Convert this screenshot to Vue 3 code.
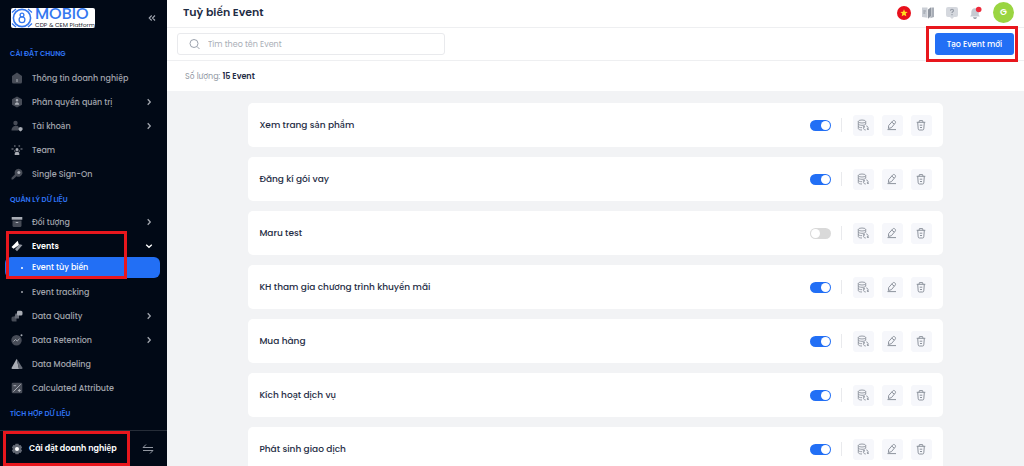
<template>
  <div class="layout">
    <aside class="sidebar">
      <header class="sidebar-header">
        <a href="#" class="logo" aria-label="MOBIO CDP &amp; CEM Platform">
          <svg width="22" height="20" viewBox="0 0 22 20" fill="none" stroke="#3478f0">
            <path d="M1 4.500 5 1M17 1l4 3.500M1 15.500l4 3.500M17 19l4-3.500" stroke-width="1.300" />
            <circle cx="11" cy="10" r="8.600" stroke-width="1.600" />
            <circle cx="11" cy="7" r="1.900" stroke-width="1.300" />
            <circle cx="11" cy="11.700" r="2.900" stroke-width="1.300" />
          </svg>
          <span class="logo-text">
            <span class="logo-name">MOBIO</span>
            <span class="logo-tagline">CDP &amp; CEM Platform</span>
          </span>
        </a>
        <button class="btn-plain" aria-label="Thu gọn">
          <svg width="8" height="8" viewBox="0 0 8 8" fill="none" stroke="#a3a8b2" stroke-width="1.1">
            <path d="M3.700 1.500 1.200 4l2.500 2.500M7 1.500 4.500 4 7 6.500" />
          </svg>
        </button>
      </header>

      <nav class="nav">
        <section v-for="group in groups" :key="group.title" class="nav-group">
          <h2 class="nav-heading">{{ group.title }}</h2>
          <div
            v-for="item in group.items"
            :key="item.label"
            class="nav-block"
            :class="{ highlighted: item.open }"
          >
            <a href="#" class="nav-item" :class="{ open: item.open }">
              <svg class="nav-icon" width="12" height="12" viewBox="0 0 12 12" fill="none">
                <path
                  v-for="(shape, i) in icons[item.icon]"
                  :key="i"
                  :d="shape.d"
                  :fill="shape.fill || 'none'"
                  :stroke="shape.stroke"
                />
              </svg>
              <span class="nav-label">{{ item.label }}</span>
              <svg
                v-if="item.children || item.expandable"
                class="chevron"
                width="8"
                height="8"
                viewBox="0 0 8 8"
                fill="none"
                stroke="currentColor"
                stroke-width="1.3"
              >
                <path :d="item.open ? 'M1.200 2.700 4 5.300l2.800-2.600' : 'M2.700 1.200 5.300 4 2.700 6.800'" />
              </svg>
            </a>
            <a
              v-for="child in item.children"
              :key="child.label"
              href="#"
              class="nav-child"
              :class="{ active: child.active }"
            >
              <span class="bullet"></span>
              {{ child.label }}
            </a>
          </div>
        </section>
      </nav>

      <footer class="sidebar-footer">
        <a href="#" class="footer-link">
          <svg width="12" height="12" viewBox="0 0 12 12">
            <path
              d="M4.500 0.800h3l.5 1.500 1.600-.3 1.500 2.500L10 6l1.100 1.500L9.600 10 8 9.700l-.5 1.500h-3L4 9.700 2.400 10 .9 7.500 2 6 .9 4.500 2.400 2l1.600.3z"
              fill="#636974"
            />
            <circle cx="6" cy="6" r="2" fill="#fff" />
          </svg>
          Cài đặt doanh nghiệp
        </a>
        <button class="btn-plain" aria-label="Chuyển đổi">
          <svg width="12" height="10" viewBox="0 0 12 10" fill="none" stroke="#9297a1" stroke-width="1">
            <path d="M4 .5 1 3.500h10M8 9.500l3-3H1" />
          </svg>
        </button>
      </footer>
    </aside>

    <main class="main">
      <header class="topbar">
        <h1 class="page-title">Tuỳ biến Event</h1>
        <div class="topbar-actions">
          <button class="btn-plain" aria-label="Tiếng Việt">
            <svg width="14" height="14" viewBox="0 0 14 14">
              <circle cx="7" cy="7" r="7" fill="#e8101c" />
              <path d="m7 3.200 1 2.500 2.700.2-2 1.700.6 2.700L7 8.900l-2.300 1.400.6-2.700-2-1.700L6 5.700z" fill="#ffe01f" />
            </svg>
          </button>
          <button class="btn-plain" aria-label="Tài liệu">
            <svg width="14" height="14" viewBox="0 0 14 14">
              <path d="M1 1.500h5.500v10.200L1 11z" fill="#cbcfd6" />
              <path d="M7 3.400 10 1.300v8.900L7 12.800z" fill="#8f959f" />
              <path d="M10.300 1.500H13V11l-4.200 1.200 1.500-1.600z" fill="#a9aeb7" />
              <path d="M2.300 5h2.500M2.300 7h2" stroke="#8f959f" />
            </svg>
          </button>
          <button class="btn-plain" aria-label="Trợ giúp">
            <svg width="14" height="14" viewBox="0 0 14 14">
              <path d="M3 1h8a2 2 0 0 1 2 2v6a2 2 0 0 1-2 2H9l-2 2-2-2H3a2 2 0 0 1-2-2V3a2 2 0 0 1 2-2z" fill="#d5d8de" />
              <path d="M5.500 4.700c0-2 3-2 3 0 0 1-1.500 1-1.500 2.300M7 8v1.200" fill="none" stroke="#9298a3" stroke-width="1.100" />
            </svg>
          </button>
          <button class="btn-plain" aria-label="Thông báo">
            <svg width="14" height="14" viewBox="0 0 14 14">
              <path d="M6 2.200c2.500 0 3.700 1.800 3.700 4v2.300l1.100 2H1.200l1.100-2V6.200c0-2.200 1.200-4 3.700-4z" fill="#c6cad1" />
              <path d="M4 11.200h4c-.3 2.400-3.700 2.400-4 0z" fill="#9da3ad" />
              <circle cx="9.700" cy="3.500" r="2.800" fill="#ee2a3b" />
            </svg>
          </button>
          <button class="avatar">G</button>
        </div>
      </header>

      <div class="toolbar">
        <label class="search-box">
          <svg width="12" height="12" viewBox="0 0 12 12" fill="none" stroke="#9ba2ad" stroke-width="1">
            <circle cx="5" cy="5.500" r="4" />
            <path d="m8 8.500 2.500 2.500" />
          </svg>
          <input
            v-model="search"
            type="text"
            class="search-input"
            placeholder="Tìm theo tên Event"
            aria-label="Tìm theo tên Event"
          />
        </label>
        <div class="create-wrap">
          <button class="btn-create">Tạo Event mới</button>
        </div>
      </div>

      <div class="summary">Số lượng: <strong>15 Event</strong></div>

      <div class="list">
        <article v-for="event in filteredEvents" :key="event.name" class="card">
          <h3 class="card-title">{{ event.name }}</h3>
          <input v-model="event.enabled" type="checkbox" class="switch" :aria-label="event.name" />
          <span class="divider"></span>
          <div class="card-actions">
            <button class="btn-icon" aria-label="Dữ liệu">
              <svg width="12" height="12" viewBox="0 0 12 12" fill="none" stroke="#8d939d" stroke-width="0.9">
                <ellipse cx="5" cy="2.500" rx="3.700" ry="1.500" />
                <path d="M1.300 2.500v7c0 1 1.700 1.500 3.700 1.500M8.700 2.500v2.800M1.300 4.800c0 2 7.400 2 7.400 0M1.300 7.200c0 1 1.700 1.500 3.700 1.500" />
                <path d="M7.200 7.300a2.100 2.100 0 0 0 1.600 3.700M9.200 6.900a2.100 2.100 0 0 1 1.400 3.500M7.300 8.700V7.200H5.900M10.400 9v1.500h1.400" />
              </svg>
            </button>
            <button class="btn-icon" aria-label="Chỉnh sửa">
              <svg width="12" height="12" viewBox="0 0 12 12" fill="none" stroke="#8d939d" stroke-width="1">
                <path d="M6.800 1.900c1.200-1.300 3.600.7 2.500 2.100L5.400 8.700l-3 .8.300-3zM5.800 3.100l2.400 2M1.500 10.600H10" />
              </svg>
            </button>
            <button class="btn-icon" aria-label="Xoá">
              <svg width="12" height="12" viewBox="0 0 12 12" fill="none" stroke="#8d939d" stroke-width="1">
                <path d="M1.700 3.300h8.600M4 3.300l.4-1.700h3.200L8 3.300M2.700 3.300l.5 6.500q.1 1.200 1.100 1.200h3.400q1 0 1.100-1.200l.5-6.500M4.700 6.200h2.600M5 8.500h2" />
              </svg>
            </button>
          </div>
        </article>
      </div>
    </main>
  </div>
</template>

<script setup>
import { computed, ref } from 'vue';

const search = ref('');

const groups = [
  {
    title: 'CÀI ĐẶT CHUNG',
    items: [
      { label: 'Thông tin doanh nghiệp', icon: 'company' },
      { label: 'Phân quyền quản trị', icon: 'role', expandable: true },
      { label: 'Tài khoản', icon: 'account', expandable: true },
      { label: 'Team', icon: 'team' },
      { label: 'Single Sign-On', icon: 'key' },
    ],
  },
  {
    title: 'QUẢN LÝ DỮ LIỆU',
    items: [
      { label: 'Đối tượng', icon: 'archive', expandable: true },
      {
        label: 'Events',
        icon: 'event',
        open: true,
        children: [
          { label: 'Event tùy biến', active: true },
          { label: 'Event tracking' },
        ],
      },
      { label: 'Data Quality', icon: 'quality', expandable: true },
      { label: 'Data Retention', icon: 'retention', expandable: true },
      { label: 'Data Modeling', icon: 'modeling' },
      { label: 'Calculated Attribute', icon: 'calculated' },
    ],
  },
  { title: 'TÍCH HỢP DỮ LIỆU', items: [] },
];

const dark = '#474c57';
const mid = '#666b76';
const light = '#a9adb5';

const icons = {
  company: [
    { d: 'M6 .5 11 4v6q0 1.500-1.500 1.500h-7Q1 11.500 1 10V4z', fill: dark },
    { d: 'M6 7v3', stroke: light },
  ],
  role: [
    { d: 'm6 .5 5 2.700v5.600l-5 2.700-5-2.700V3.200z', fill: dark },
    { d: 'M6 3a1.300 1.300 0 0 1 0 2.600A1.300 1.300 0 0 1 6 3zM3.800 8.700c0-3.400 4.400-3.400 4.400 0z', fill: light },
  ],
  account: [
    { d: 'M4.500.8a2.200 2.200 0 0 1 0 4.400 2.200 2.200 0 0 1 0-4.400zM.5 10.500C.5 5 7.500 5 7.500 7v3.500z', fill: dark },
    { d: 'm9.500 7 2 .7v1.500q-.3 1.500-2 2.300-1.700-.8-2-2.300V7.700z', fill: light },
  ],
  team: [
    { d: 'M3 1h1.600v2H3zM7.500 1h1.600v2H7.500zM.5 4h2v2h-2zM9.500 4h2v2h-2zM3 6h1.500v2H3zM7.500 6H9v2H7.500z', fill: dark },
    { d: 'M6 4a1.500 1.500 0 0 1 0 3 1.500 1.500 0 0 1 0-3zM3.700 11V9.500c0-2.200 4.600-2.200 4.600 0V11z', fill: light },
  ],
  key: [
    { d: 'M7.500.7a4 4 0 1 1-2 7.500L2 11.500H.5V9.700L4 6.300A4 4 0 0 1 7.500.7z', fill: dark },
    { d: 'M7.800 3.100a1.500 1.500 0 0 1 0 3 1.500 1.500 0 0 1 0-3z', fill: light },
  ],
  archive: [
    { d: 'M1.500 4.500h9v5q0 1.500-1.500 1.500H3Q1.500 11 1.500 9.500z', fill: dark },
    { d: 'M.7 1h10.600v2.700H.7z', fill: light },
    { d: 'M4.700 6.500h2.600', stroke: light },
  ],
  event: [
    { d: 'M6.700.8 8 5 2.500 8.800.5 7z', fill: '#fff' },
    { d: 'M8.500 4.200 11.500 5 6 11.300 4 9.300z', fill: '#9398a2' },
  ],
  quality: [
    { d: 'M2 6.500h3.500v5H2q-1.500 0-1.500-1.500V8q0-1.500 1.500-1.500z', fill: dark },
    { d: 'M4.500 3.500H8v5H5q-1.500 0-1.500-1.500z', fill: mid },
    { d: 'M7.300.7H10q1.500 0 1.500 1.500V4q0 1.500-1.500 1.500H7.300Q6 5.500 6 4V2q0-1.300 1.300-1.300z', fill: light },
  ],
  retention: [
    { d: 'M5.500 1a5 5 0 0 1 0 10.500A5 5 0 0 1 5.500 1z', fill: dark },
    { d: 'M2.500 7.500 4.500 5.500 6.200 7 8.500 4.800', stroke: light },
    { d: 'M10.500.3a1 1 0 0 1 0 2 1 1 0 0 1 0-2z', fill: light },
  ],
  modeling: [
    { d: 'M5.700.8 8 11H1.500Q0 11 .8 9.500z', fill: light },
    { d: 'M5.700.8 11.300 9.500Q12 11 10.500 11H8z', fill: mid },
  ],
  calculated: [
    { d: 'M2 .7h8q1.300 0 1.300 1.300v8q0 1.300-1.300 1.300H2Q.7 11.300.7 10V2Q.7.7 2 .7z', fill: dark },
    { d: 'M2.300 9.700 9.700 2.300M2.500 3.700h2.700M6.800 8.500h3M8.300 7v3', stroke: light },
  ],
};

const events = ref([
  { name: 'Xem trang sản phẩm', enabled: true },
  { name: 'Đăng kí gói vay', enabled: true },
  { name: 'Maru test', enabled: false },
  { name: 'KH tham gia chương trình khuyến mãi', enabled: true },
  { name: 'Mua hàng', enabled: true },
  { name: 'Kích hoạt dịch vụ', enabled: true },
  { name: 'Phát sinh giao dịch', enabled: true },
]);

const filteredEvents = computed(() => {
  const term = search.value.trim().toLowerCase();
  return events.value.filter((event) => event.name.toLowerCase().includes(term));
});
</script>

<style>
body {
  margin: 0;
  background: #f2f3f5;
}
</style>

<style scoped>
.layout {
  display: flex;
  height: 100vh;
  overflow: hidden;
  font-family: Poppins, Inter, sans-serif;
  font-size: 8px;
  line-height: 15px;
  color: #1f2d45;
}

.layout * {
  box-sizing: border-box;
}

a {
  color: inherit;
  text-decoration: none;
}

button,
input {
  font: inherit;
}

svg {
  display: block;
  flex: none;
}

.btn-plain {
  display: flex;
  padding: 0;
  border: none;
  background: transparent;
  cursor: pointer;
}

.sidebar {
  display: flex;
  flex-direction: column;
  flex: none;
  width: 167px;
  background: #010916;
  color: #a1a5ad;
  font-weight: 500;
}

.sidebar-header {
  display: flex;
  align-items: center;
  justify-content: space-between;
  flex: none;
  height: 40px;
  padding: 0 11px 4px;
}

.logo {
  display: flex;
  gap: 2px;
  width: 84px;
  height: 20px;
  border-radius: 2px;
  background: #fff;
}

.logo-text {
  display: flex;
  flex-direction: column;
  white-space: nowrap;
}

.logo-name {
  font-size: 16px;
  line-height: 12px;
  color: #3478f0;
}

.logo-tagline {
  font-size: 6px;
  font-weight: 400;
  line-height: 10px;
  color: #252a33;
}

.nav {
  flex: 1;
  overflow: hidden;
}

.nav-heading {
  margin: 4px 0 0;
  padding-left: 10px;
  font-size: 7px;
  font-weight: 600;
  line-height: 20px;
  color: #2f74f5;
}

.nav-group:first-child .nav-heading {
  margin-bottom: 2px;
}

.nav-item {
  display: flex;
  align-items: center;
  height: 24px;
  padding: 0 14px 0 11px;
}

.nav-label {
  flex: 1;
  margin-left: 9px;
}

.nav-item.open {
  color: #fff;
  font-weight: 600;
}

.nav-child {
  display: flex;
  align-items: center;
  height: 24px;
  margin: 0 7px 0 5px;
  padding-left: 16px;
}

.nav-child.active {
  height: 21px;
  margin-top: -1px;
  margin-bottom: 2px;
  border-radius: 6px;
  background: #226ff5;
  color: #fff;
}

.bullet {
  width: 2px;
  height: 2px;
  margin-right: 9px;
  border-radius: 50%;
  background: currentColor;
}

.highlighted,
.create-wrap,
.footer-link {
  position: relative;
}

.highlighted::after,
.create-wrap::after,
.footer-link::after {
  content: '';
  position: absolute;
  border: 3px solid #e8171d;
  pointer-events: none;
}

.highlighted::after {
  top: -3px;
  right: 40px;
  bottom: 25px;
  left: 6px;
}

.sidebar-footer {
  display: flex;
  align-items: center;
  justify-content: space-between;
  flex: none;
  height: 36px;
  padding: 0 13px 0 11px;
  border-top: 1px solid #262d38;
}

.footer-link {
  display: flex;
  align-items: center;
  gap: 6px;
  color: #fff;
  font-weight: 600;
}

.footer-link::after {
  inset: -10px -13px -10px -8px;
}

.main {
  display: flex;
  flex: 1;
  flex-direction: column;
  min-width: 0;
}

.topbar,
.toolbar {
  display: flex;
  align-items: center;
  justify-content: space-between;
  flex: none;
  border-bottom: 1px solid #eeeff1;
  background: #fff;
}

.topbar {
  height: 28px;
  padding: 0 10px 2px 16px;
}

.page-title {
  margin: 0;
  font-size: 11px;
  font-weight: 600;
}

.topbar-actions {
  display: flex;
  align-items: center;
  gap: 10px;
}

.avatar {
  width: 21px;
  height: 21px;
  padding: 0;
  border: none;
  border-radius: 50%;
  background: #9ad541;
  color: #fff;
  font-size: 9px;
  font-weight: 600;
}

.toolbar {
  height: 33px;
  padding: 0 10px;
}

.search-box {
  display: flex;
  align-items: center;
  gap: 7px;
  width: 268px;
  height: 22px;
  padding: 0 11px;
  border: 1px solid #e9eaed;
  border-radius: 3px;
}

.search-input {
  flex: 1;
  min-width: 0;
  padding: 0;
  border: none;
  outline: none;
  background: transparent;
  color: #1f2d45;
}

.search-input::placeholder {
  color: #a9aeb6;
}

.btn-create {
  display: block;
  width: 79px;
  height: 22px;
  padding: 0;
  border: none;
  border-radius: 3px;
  background: #226ff5;
  color: #fff;
  font-weight: 500;
  white-space: nowrap;
  cursor: pointer;
}

.create-wrap::after {
  inset: -7px -4px -7px -9px;
}

.summary {
  flex: none;
  height: 30px;
  padding: 8px 18px 7px;
  background: #fff;
  color: #9299a4;
}

.summary strong {
  color: #1f2d45;
  font-weight: 600;
}

.list {
  display: flex;
  flex: 1;
  flex-direction: column;
  align-items: center;
  gap: 10px;
  padding-top: 12px;
  overflow-y: auto;
  scrollbar-width: none;
  background: #f2f3f5;
}

.card {
  display: flex;
  align-items: center;
  flex: none;
  width: 81%;
  height: 44px;
  padding: 0 11px;
  border-radius: 5px;
  background: #fff;
}

.card-title {
  flex: 1;
  margin: 0;
  font-size: 9px;
  font-weight: 500;
}

.switch {
  display: flex;
  align-items: center;
  width: 21px;
  height: 11px;
  margin: 0;
  padding: 0 1px;
  appearance: none;
  border-radius: 6px;
  background: #d9d9d9;
  cursor: pointer;
}

.switch::before {
  content: '';
  width: 9px;
  height: 9px;
  border-radius: 50%;
  background: #fff;
}

.switch:checked {
  justify-content: flex-end;
  background: #226ff5;
}

.divider {
  width: 1px;
  height: 14px;
  margin: 0 11px 0 10px;
  background: #e9eaed;
}

.card-actions {
  display: flex;
  gap: 8px;
}

.btn-icon {
  display: flex;
  align-items: center;
  justify-content: center;
  width: 21px;
  height: 21px;
  padding: 0;
  border: none;
  border-radius: 3px;
  background: #f6f7fb;
  cursor: pointer;
}
</style>
